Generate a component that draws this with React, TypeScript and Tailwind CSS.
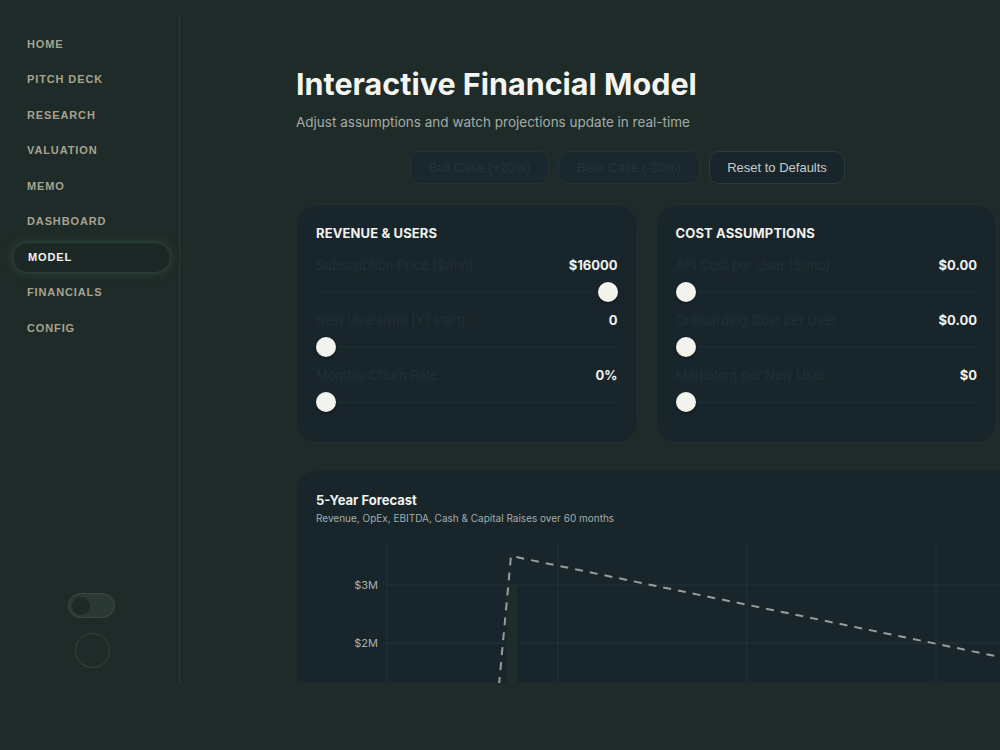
import React from "react";

const NAV = ["HOME", "PITCH DECK", "RESEARCH", "VALUATION", "MEMO", "DASHBOARD", "MODEL", "FINANCIALS", "CONFIG"];

type SliderRow = { label: string; value: string; pos: "start" | "end" };

const REVENUE: SliderRow[] = [
  { label: "Subscription Price ($/mo)", value: "$16000", pos: "end" },
  { label: "New Users/mo (Y1 start)", value: "0", pos: "start" },
  { label: "Monthly Churn Rate", value: "0%", pos: "start" },
];

const COSTS: SliderRow[] = [
  { label: "API Cost per User ($/mo)", value: "$0.00", pos: "start" },
  { label: "Onboarding Cost per User", value: "$0.00", pos: "start" },
  { label: "Marketing per New User", value: "$0", pos: "start" },
];

function Slider({ row }: { row: SliderRow }) {
  return (
    <div className="flex flex-col">
      <div className="flex h-4 items-center justify-between">
        <span className="text-[13px] text-[#203037]">{row.label}</span>
        <span className="text-[13px] font-bold text-[#f1f1ec]">{row.value}</span>
      </div>
      <div className={`relative mt-2 flex h-5 items-center ${row.pos === "end" ? "justify-end" : "justify-start"}`}>
        <div className="absolute left-0 right-0 top-[9px] h-[2px] bg-[#1a2a2f]" />
        <div className="relative h-5 w-5 rounded-full bg-[#f3f3ee] shadow-[0_1px_3px_rgba(0,0,0,0.4)]" />
      </div>
    </div>
  );
}

function AssumptionCard({ title, rows }: { title: string; rows: SliderRow[] }) {
  return (
    <div className="flex h-[237px] flex-col rounded-[20px] bg-[#18252b] px-[19px] pt-[19px] shadow-[0_0_0_1px_rgba(40,60,60,0.25)]">
      <h3 className="h-[18px] text-[13px] font-bold leading-[18px] tracking-[0.01em] text-[#f1f1ec]">{title}</h3>
      <div className="mt-4 flex flex-col gap-[11px]">
        {rows.map((r) => (
          <Slider key={r.label} row={r} />
        ))}
      </div>
    </div>
  );
}

function Forecast() {
  return (
    <div className="h-[240px] w-[740px] rounded-[20px] bg-[#18252b]">
      <div className="pl-[19px] pt-[20px]">
        <h3 className="text-[13px] font-bold leading-[18px] text-[#f1f1ec]">5-Year Forecast</h3>
        <p className="mt-[2px] text-[10px] leading-[14px] text-[#a3aeac]">
          Revenue, OpEx, EBITDA, Cash &amp; Capital Raises over 60 months
        </p>
      </div>
      <svg width="740" height="160" className="mt-[15px] block" viewBox="0 0 740 160">
        {[90, 261, 450, 639].map((x) => (
          <line key={x} x1={x} y1={3} x2={x} y2={160} stroke="#23343a" strokeWidth={1} />
        ))}
        {[45, 103].map((y) => (
          <line key={y} x1={90} y1={y} x2={740} y2={y} stroke="#23343a" strokeWidth={1} />
        ))}
        <rect x={210} y={45} width={10} height={115} fill="#1e2d2a" />
        <text x={81} y={49} textAnchor="end" fontSize="11" fill="#a9b1ae" fontFamily="Inter, sans-serif">$3M</text>
        <text x={81} y={107} textAnchor="end" fontSize="11" fill="#a9b1ae" fontFamily="Inter, sans-serif">$2M</text>
        <path
          d="M 202 145 L 214 16 L 740 124.6"
          fill="none"
          stroke="#9d9d98"
          strokeWidth={2}
          strokeDasharray="8 7"
        />
      </svg>
    </div>
  );
}

export default function App() {
  return (
    <div className="h-[750px] w-[1000px] overflow-hidden bg-[#1f2b28] font-['Inter',sans-serif]">
      <div className="flex h-[683px] overflow-hidden">
        <aside className="mt-4 flex w-[180px] shrink-0 flex-col border-r border-[#2a3833]">
          <nav className="flex flex-col gap-[4.5px] pl-3 pr-2 pt-[12.5px]">
            {NAV.map((item) => {
              const active = item === "MODEL";
              return (
                <div
                  key={item}
                  className={`flex h-[31px] items-center rounded-full pl-[15px] font-['Liberation_Sans',Arial,sans-serif] text-[11px] font-bold tracking-[0.08em] ${
                    active
                      ? "border border-[#2b3f38] bg-[#1b2826] pl-[14px] text-[#f4f4f0] shadow-[0_0_8px_rgba(70,120,95,0.35)]"
                      : "text-[#a8a38f]"
                  }`}
                >
                  {item}
                </div>
              );
            })}
          </nav>
          <div className="flex-1" />
          <div className="flex flex-col pb-[15px]">
            <div className="ml-[68px] flex h-[25px] w-[47px] items-center rounded-full border border-[#3a4a43] bg-[#2b3934] px-[3px]">
              <div className="h-[18px] w-[18px] rounded-full bg-[#1e2a27]" />
            </div>
            <div className="ml-[75px] mt-[15px] h-[35px] w-[35px] rounded-full border border-[#34443e]" />
          </div>
        </aside>

        <main className="min-w-0 flex-1 pl-[116px] pt-[64px]">
          <h1 className="text-[30.5px] font-bold leading-[40px] text-[#f4f4f0]">
            Interactive Financial Model
          </h1>
          <p className="mt-[8px] text-[13.5px] leading-5 text-[#a3acaa]">
            Adjust assumptions and watch projections update in real-time
          </p>
          <div className="ml-[114px] mt-[19px] flex gap-[9px] font-['Liberation_Sans',Arial,sans-serif]">
            <button className="h-[33px] w-[139px] rounded-[10px] border border-[#22333a] bg-[#1a272c] text-[13px] text-[#24353c]">
              Bull Case (+20%)
            </button>
            <button className="h-[33px] w-[142px] rounded-[10px] border border-[#22333a] bg-[#1a272c] text-[13px] text-[#24353c]">
              Bear Case (-20%)
            </button>
            <button className="h-[33px] w-[136px] rounded-[10px] border border-[#2b3b40] bg-[#18252b] text-[13px] text-[#c7ccc9]">
              Reset to Defaults
            </button>
          </div>
          <div className="mt-[21px] grid w-[700px] grid-cols-2 gap-5 pl-px">
            <AssumptionCard title="REVENUE & USERS" rows={REVENUE} />
            <AssumptionCard title="COST ASSUMPTIONS" rows={COSTS} />
          </div>
          <div className="mt-[29px] pl-px">
            <Forecast />
          </div>
        </main>
      </div>
    </div>
  );
}
